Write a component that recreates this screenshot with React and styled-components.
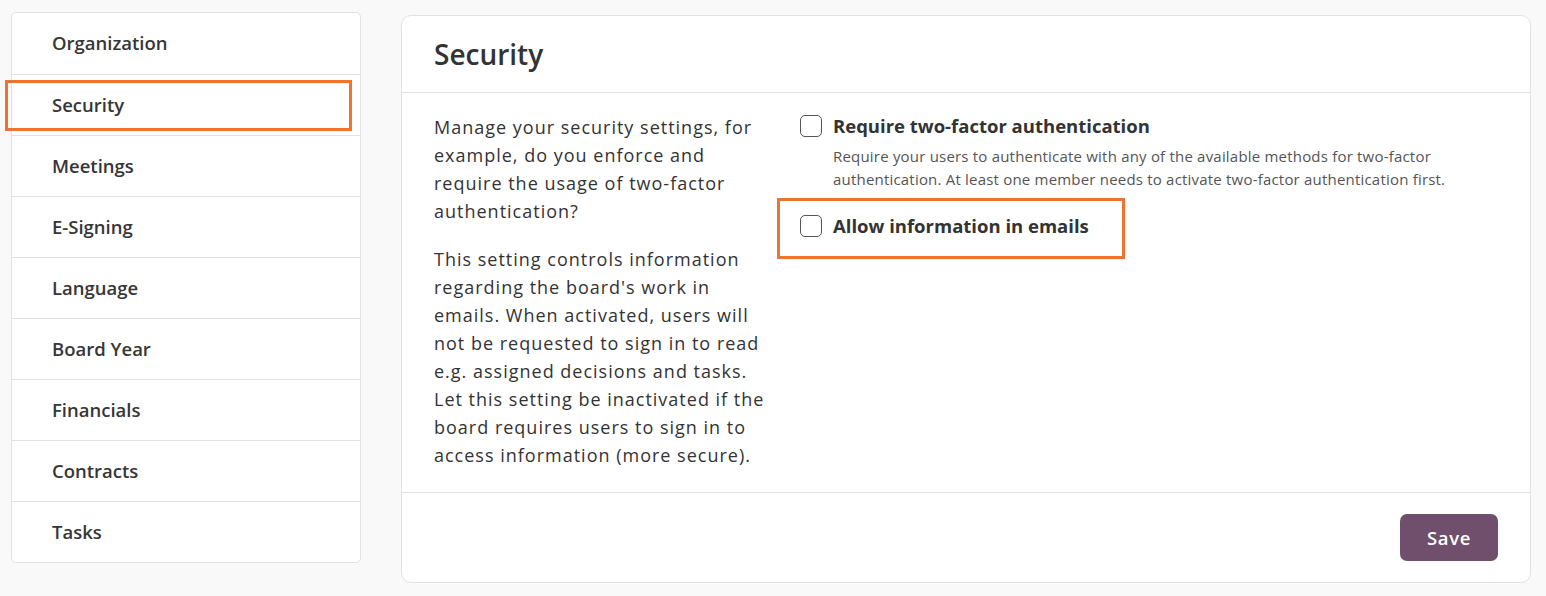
import styled, { createGlobalStyle } from 'styled-components';

const GlobalStyle = createGlobalStyle`
  * { box-sizing: border-box; }
  body {
    margin: 0;
    background: #f9f9f9;
    font-family: 'Open Sans', 'Liberation Sans', sans-serif;
    color: #333;
  }
`

const Page = styled.div`
  display: flex;
  align-items: flex-start;
  gap: 40px;
  padding: 12px 15px 0 11px;
  width: 1546px;
  height: 596px;
`

const Side = styled.ul`
  list-style: none;
  margin: 0;
  padding: 0;
  width: 350px;
  flex-shrink: 0;
  background: #fff;
  border: 1px solid #e2e2e2;
  border-radius: 5px;
`

const SideItem = styled.li`
  position: relative;
  height: 61px;
  display: flex;
  align-items: center;
  padding-left: 40px;
  padding-bottom: 2px;
  font-size: 18.5px;
  font-weight: 600;
  color: #363636;
  border-top: ${p => (p.first ? 'none' : '1px solid #e2e2e2')};
`

// orange highlight frames drawn over the content
const Mark = styled.span`
  position: absolute;
  border: 3px solid #ed7430;
  pointer-events: none;
`

const Card = styled.section`
  flex: 1;
  margin-top: 3px;
  background: #fff;
  border: 1px solid #e2e2e2;
  border-radius: 10px;
`

const CardHead = styled.header`
  height: 77px;
  display: flex;
  align-items: center;
  padding-left: 32px;
  border-bottom: 1px solid #e2e2e2;
  h2 {
    margin: 0;
    font-size: 28px;
    font-weight: 600;
    color: #333;
  }
`

const CardBody = styled.div`
  display: grid;
  grid-template-columns: 331px 1fr;
  gap: 35px;
  padding: 20px 32px 23px 32px;
  border-bottom: 1px solid #e2e2e2;
`

const Intro = styled.div`
  font-size: 18px;
  line-height: 28px;
  letter-spacing: 1px;
  color: #333;
  p {
    margin: 0 0 20px;
  }
  p:last-child {
    margin-bottom: 0;
  }
`

const Options = styled.div`
  display: flex;
  flex-direction: column;
  gap: 23px;
  padding-top: 1px;
`

const Option = styled.label`
  position: relative;
  display: grid;
  grid-template-columns: 22px 1fr;
  column-gap: 11px;
  align-items: start;
`

const Box = styled.span`
  width: 22px;
  height: 22px;
  margin-top: 1px;
  border: 1.5px solid #555;
  border-radius: 5px;
  background: #fff;
`

const OptTitle = styled.span`
  font-size: 18.5px;
  font-weight: 700;
  line-height: 24px;
  color: #333;
`

const OptDesc = styled.span`
  grid-column: 2;
  max-width: 625px;
  margin-top: 7px;
  font-size: 15px;
  letter-spacing: 0.2px;
  line-height: 23px;
  color: #555;
`

const CardFoot = styled.footer`
  height: 89px;
  display: flex;
  align-items: center;
  justify-content: flex-end;
  padding-right: 32px;
`

const SaveButton = styled.button`
  width: 98px;
  height: 47px;
  border: none;
  border-radius: 7px;
  background: #6f4f6b;
  color: #fff;
  font-family: inherit;
  font-size: 18.5px;
  font-weight: 600;
  letter-spacing: 0.6px;
`

const menu = ['Organization', 'Security', 'Meetings', 'E-Signing', 'Language', 'Board Year', 'Financials', 'Contracts', 'Tasks'];

export default function App() {
  return (
    <>
      <GlobalStyle />
      <Page>
        <Side>
          {menu.map((m, i) => (
            <SideItem key={m} first={i === 0}>
              {m}
              {m === 'Security' && <Mark style={{ left: -7, top: 5, width: 347, height: 51 }} />}
            </SideItem>
          ))}
        </Side>

        <Card>
          <CardHead>
            <h2>Security</h2>
          </CardHead>
          <CardBody>
            <Intro>
              <p>Manage your security settings, for example, do you enforce and require the usage of two-factor authentication?</p>
              <p>This setting controls information regarding the board's work in emails. When activated, users will not be requested to sign in to read e.g. assigned decisions and tasks. Let this setting be inactivated if the board requires users to sign in to access information (more secure).</p>
            </Intro>
            <Options>
              <Option>
                <Box />
                <OptTitle>Require two-factor authentication</OptTitle>
                <OptDesc>Require your users to authenticate with any of the available methods for two-factor authentication. At least one member needs to activate two-factor authentication first.</OptDesc>
              </Option>
              <Option>
                <Box />
                <OptTitle>Allow information in emails</OptTitle>
                <Mark style={{ left: -23, top: -16, width: 348, height: 61 }} />
              </Option>
            </Options>
          </CardBody>
          <CardFoot>
            <SaveButton>Save</SaveButton>
          </CardFoot>
        </Card>
      </Page>
    </>
  );
}
